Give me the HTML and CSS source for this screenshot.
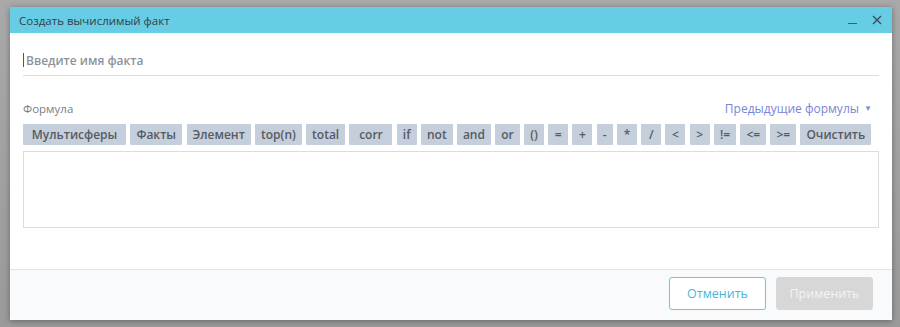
FILE: index.html
```html
<!DOCTYPE html>
<html lang="ru">
<head>
    <meta charset="UTF-8">
    <title>Создать вычислимый факт</title>
    <link rel="stylesheet" href="styles.css">
</head>
<body>
    <div class="dialog">
        <div class="dialog-header">
            <span class="dialog-title">Создать вычислимый факт</span>
            <div class="dialog-controls">
                <span class="ctrl-min"></span>
                <svg class="ctrl-close" width="10" height="10" viewBox="0 0 10 10">
                    <path d="M1 1 L9 9 M9 1 L1 9" stroke="#3b4a56" stroke-width="1.3" fill="none"/>
                </svg>
            </div>
        </div>

        <div class="dialog-body">
            <div class="fact-name">
                <span class="caret"></span>
                <span class="placeholder">Введите имя факта</span>
            </div>

            <div class="formula-head">
                <span class="formula-label">Формула</span>
                <span class="prev-formulas">Предыдущие формулы <span class="arrow">▼</span></span>
            </div>

            <div class="toolbar">
                <span class="op op-multi">Мультисферы</span>
                <span class="op op-facts">Факты</span>
                <span class="op">Элемент</span>
                <span class="op">top(n)</span>
                <span class="op">total</span>
                <span class="op op-corr">corr</span>
                <span class="op">if</span>
                <span class="op">not</span>
                <span class="op">and</span>
                <span class="op">or</span>
                <span class="op">()</span>
                <span class="op">=</span>
                <span class="op">+</span>
                <span class="op op-narrow">-</span>
                <span class="op">*</span>
                <span class="op">/</span>
                <span class="op">&lt;</span>
                <span class="op">&gt;</span>
                <span class="op">!=</span>
                <span class="op">&lt;=</span>
                <span class="op">&gt;=</span>
                <span class="op">Очистить</span>
            </div>

            <div class="formula-box"></div>
        </div>

        <div class="dialog-footer">
            <button class="btn btn-cancel">Отменить</button>
            <button class="btn btn-apply" disabled>Применить</button>
        </div>
    </div>
</body>
</html>
```

FILE: styles.css
```css
* {
    margin: 0;
    padding: 0;
    box-sizing: border-box;
}

body {
    font-family: "Open Sans", "Noto Sans", sans-serif;
    background: linear-gradient(180deg, #a9a9a9 0%, #9a9a9a 100%);
    width: 900px;
    height: 327px;
    padding: 7px 8px 7px 10px;
    overflow: hidden;
}

.dialog {
    width: 882px;
    height: 313px;
    background: #fff;
    display: flex;
    flex-direction: column;
    box-shadow: 0 1px 6px rgba(0, 0, 0, 0.35);
}

.dialog-header {
    height: 26px;
    background: #66cde5;
    display: flex;
    align-items: center;
    justify-content: space-between;
    padding: 0 10px 0 9px;
}

.dialog-title {
    font-size: 11.5px;
    color: #33404a;
}

.dialog-controls {
    display: flex;
    align-items: center;
    gap: 15px;
}

.ctrl-min {
    display: block;
    width: 9px;
    height: 1px;
    background: #4a5a66;
    margin-top: 6px;
}

.ctrl-close {
    display: block;
}

.dialog-body {
    flex: 1;
    padding: 0 13px;
    display: flex;
    flex-direction: column;
}

.fact-name {
    margin-top: 12px;
    height: 31px;
    border-bottom: 1px solid #dcdcdc;
    display: flex;
    align-items: center;
}

.caret {
    width: 1px;
    height: 14px;
    background: #555;
    margin-right: 2px;
}

.placeholder {
    font-size: 12px;
    font-weight: 600;
    color: #8d939c;
}

.formula-head {
    margin-top: 24px;
    display: flex;
    justify-content: space-between;
    align-items: center;
    height: 16px;
    padding-right: 7px;
}

.formula-label {
    font-size: 11.5px;
    color: #7d7d7d;
}

.prev-formulas {
    font-size: 12px;
    color: #7b83d6;
}

.prev-formulas .arrow {
    font-size: 8px;
    color: #6f8edb;
    margin-left: 2px;
    vertical-align: 2px;
}

.toolbar {
    margin-top: 8px;
    display: flex;
    gap: 4.25px;
}

.op {
    height: 21px;
    min-width: 20px;
    padding: 0 6px;
    background: #c5cedb;
    color: #555b63;
    font-size: 12px;
    font-weight: 600;
    display: flex;
    align-items: center;
    justify-content: center;
    border-radius: 1px;
}

.op-multi {
    min-width: 103px;
}

.op-facts {
    min-width: 52px;
}

.op-corr {
    min-width: 43px;
}

.op-narrow {
    min-width: 16px;
}

.formula-box {
    margin-top: 6px;
    height: 77px;
    border: 1px solid #dcdcdc;
}

.dialog-footer {
    height: 51px;
    background: #f9fafc;
    border-top: 1px solid #e2e4e8;
    display: flex;
    justify-content: flex-end;
    align-items: center;
    gap: 10px;
    padding: 0 19px 4px 0;
}

.btn {
    width: 97px;
    height: 33px;
    border-radius: 3px;
    font-family: inherit;
    font-size: 12.5px;
}

.btn-cancel {
    background: #fff;
    border: 1px solid #5ecae3;
    color: #45b6da;
}

.btn-apply {
    background: #d7d7d7;
    border: 1px solid #d7d7d7;
    color: #f4f4f4;
}
```
